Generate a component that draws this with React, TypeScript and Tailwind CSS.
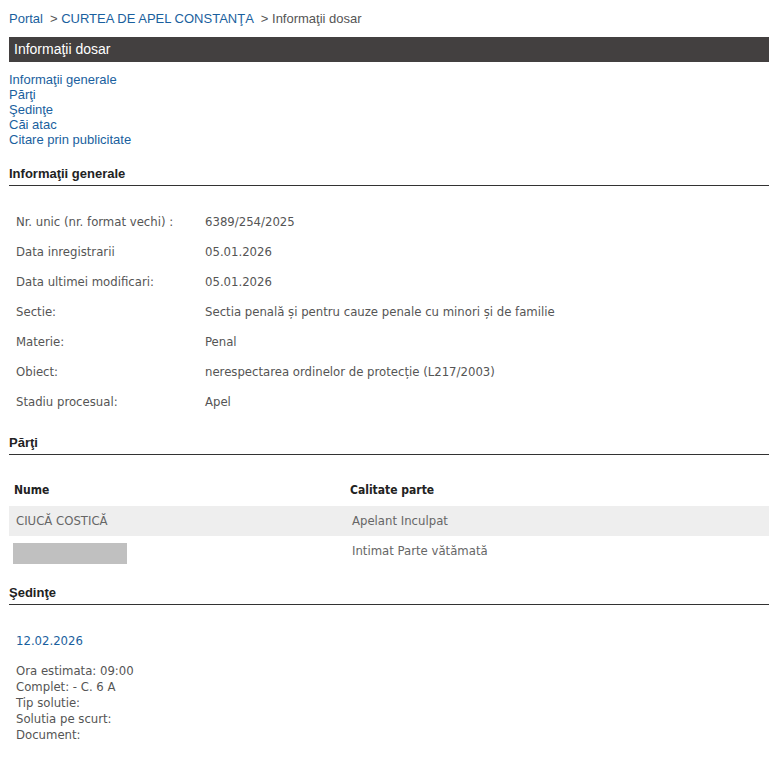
import React from "react";

const INFO = [
  { label: "Nr. unic (nr. format vechi) :", value: "6389/254/2025" },
  { label: "Data inregistrarii", value: "05.01.2026" },
  { label: "Data ultimei modificari:", value: "05.01.2026" },
  { label: "Sectie:", value: "Sectia penală și pentru cauze penale cu minori și de familie" },
  { label: "Materie:", value: "Penal" },
  { label: "Obiect:", value: "nerespectarea ordinelor de protecție (L217/2003)" },
  { label: "Stadiu procesual:", value: "Apel" },
];

const LINKS = ["Informaţii generale", "Părţi", "Şedinţe", "Căi atac", "Citare prin publicitate"];

const tahoma = "font-['DejaVu_Sans_Condensed','DejaVu_Sans',sans-serif]";

function SectionTitle({ children }: { children: React.ReactNode }) {
  return (
    <div className="border-b border-[#333] pb-[3px] text-[13px] font-bold leading-[16px] text-[#222]">
      {children}
    </div>
  );
}

export default function App() {
  return (
    <div className="min-h-[763px] bg-white pl-[9px] pr-[14px] pt-[11px] font-['Liberation_Sans',Arial,sans-serif]">
      {/* breadcrumb */}
      <div className="flex gap-[7px] text-[13px] leading-[16px] text-[#555]">
        <span className="text-[#1a5f9e]">Portal</span>
        <span>
          &gt; <span className="text-[#1a5f9e]">CURTEA DE APEL CONSTANŢA</span>
        </span>
        <span>&gt; Informaţii dosar</span>
      </div>

      <div className="mt-[10px] h-[25px] bg-[#434040] px-[5px] text-[14px] leading-[25px] text-white">
        Informaţii dosar
      </div>

      <div className="mt-[10px] flex flex-col text-[13px] leading-[15px] text-[#1a5f9e]">
        {LINKS.map((l) => (
          <span key={l}>{l}</span>
        ))}
      </div>

      <div className="mt-[19px]">
        <SectionTitle>Informaţii generale</SectionTitle>
      </div>

      <div className={`mt-[21px] flex flex-col text-[13px] text-[#555] ${tahoma}`}>
        {INFO.map((r) => (
          <div key={r.label} className="flex h-[30px] items-center">
            <span className="w-[196px] pl-[7px]">{r.label}</span>
            <span>{r.value}</span>
          </div>
        ))}
      </div>

      <div className="mt-[18px]">
        <SectionTitle>Părţi</SectionTitle>
      </div>

      <div className={`mt-[20px] text-[13px] ${tahoma}`}>
        <div className="flex h-[30px] items-center text-[12px] font-bold text-[#222]">
          <span className="w-[341px] pl-[5px]">Nume</span>
          <span>Calitate parte</span>
        </div>
        <div className="mt-[1px] flex h-[30px] items-center bg-[#eeeeee] text-[#666]">
          <span className="w-[343px] pl-[7px]">CIUCĂ COSTICĂ</span>
          <span>Apelant Inculpat</span>
        </div>
        <div className="flex h-[30px] items-center text-[#666]">
          <div className="w-[343px] pl-[4px] pt-[4px]">
            <div className="h-[21px] w-[114px] bg-[#c0c0c0]" />
          </div>
          <span>Intimat Parte vătămată</span>
        </div>
      </div>

      <div className="mt-[19px]">
        <SectionTitle>Şedinţe</SectionTitle>
      </div>

      <div className={`mt-[28px] pl-[7px] text-[13px] ${tahoma}`}>
        <div className="leading-[16px] text-[#1a5f9e]">12.02.2026</div>
        <div className="mt-[14px] flex flex-col leading-[16px] text-[#555]">
          <span>Ora estimata: 09:00</span>
          <span>Complet: - C. 6 A</span>
          <span>Tip solutie:</span>
          <span>Solutia pe scurt:</span>
          <span>Document:</span>
        </div>
      </div>
    </div>
  );
}
